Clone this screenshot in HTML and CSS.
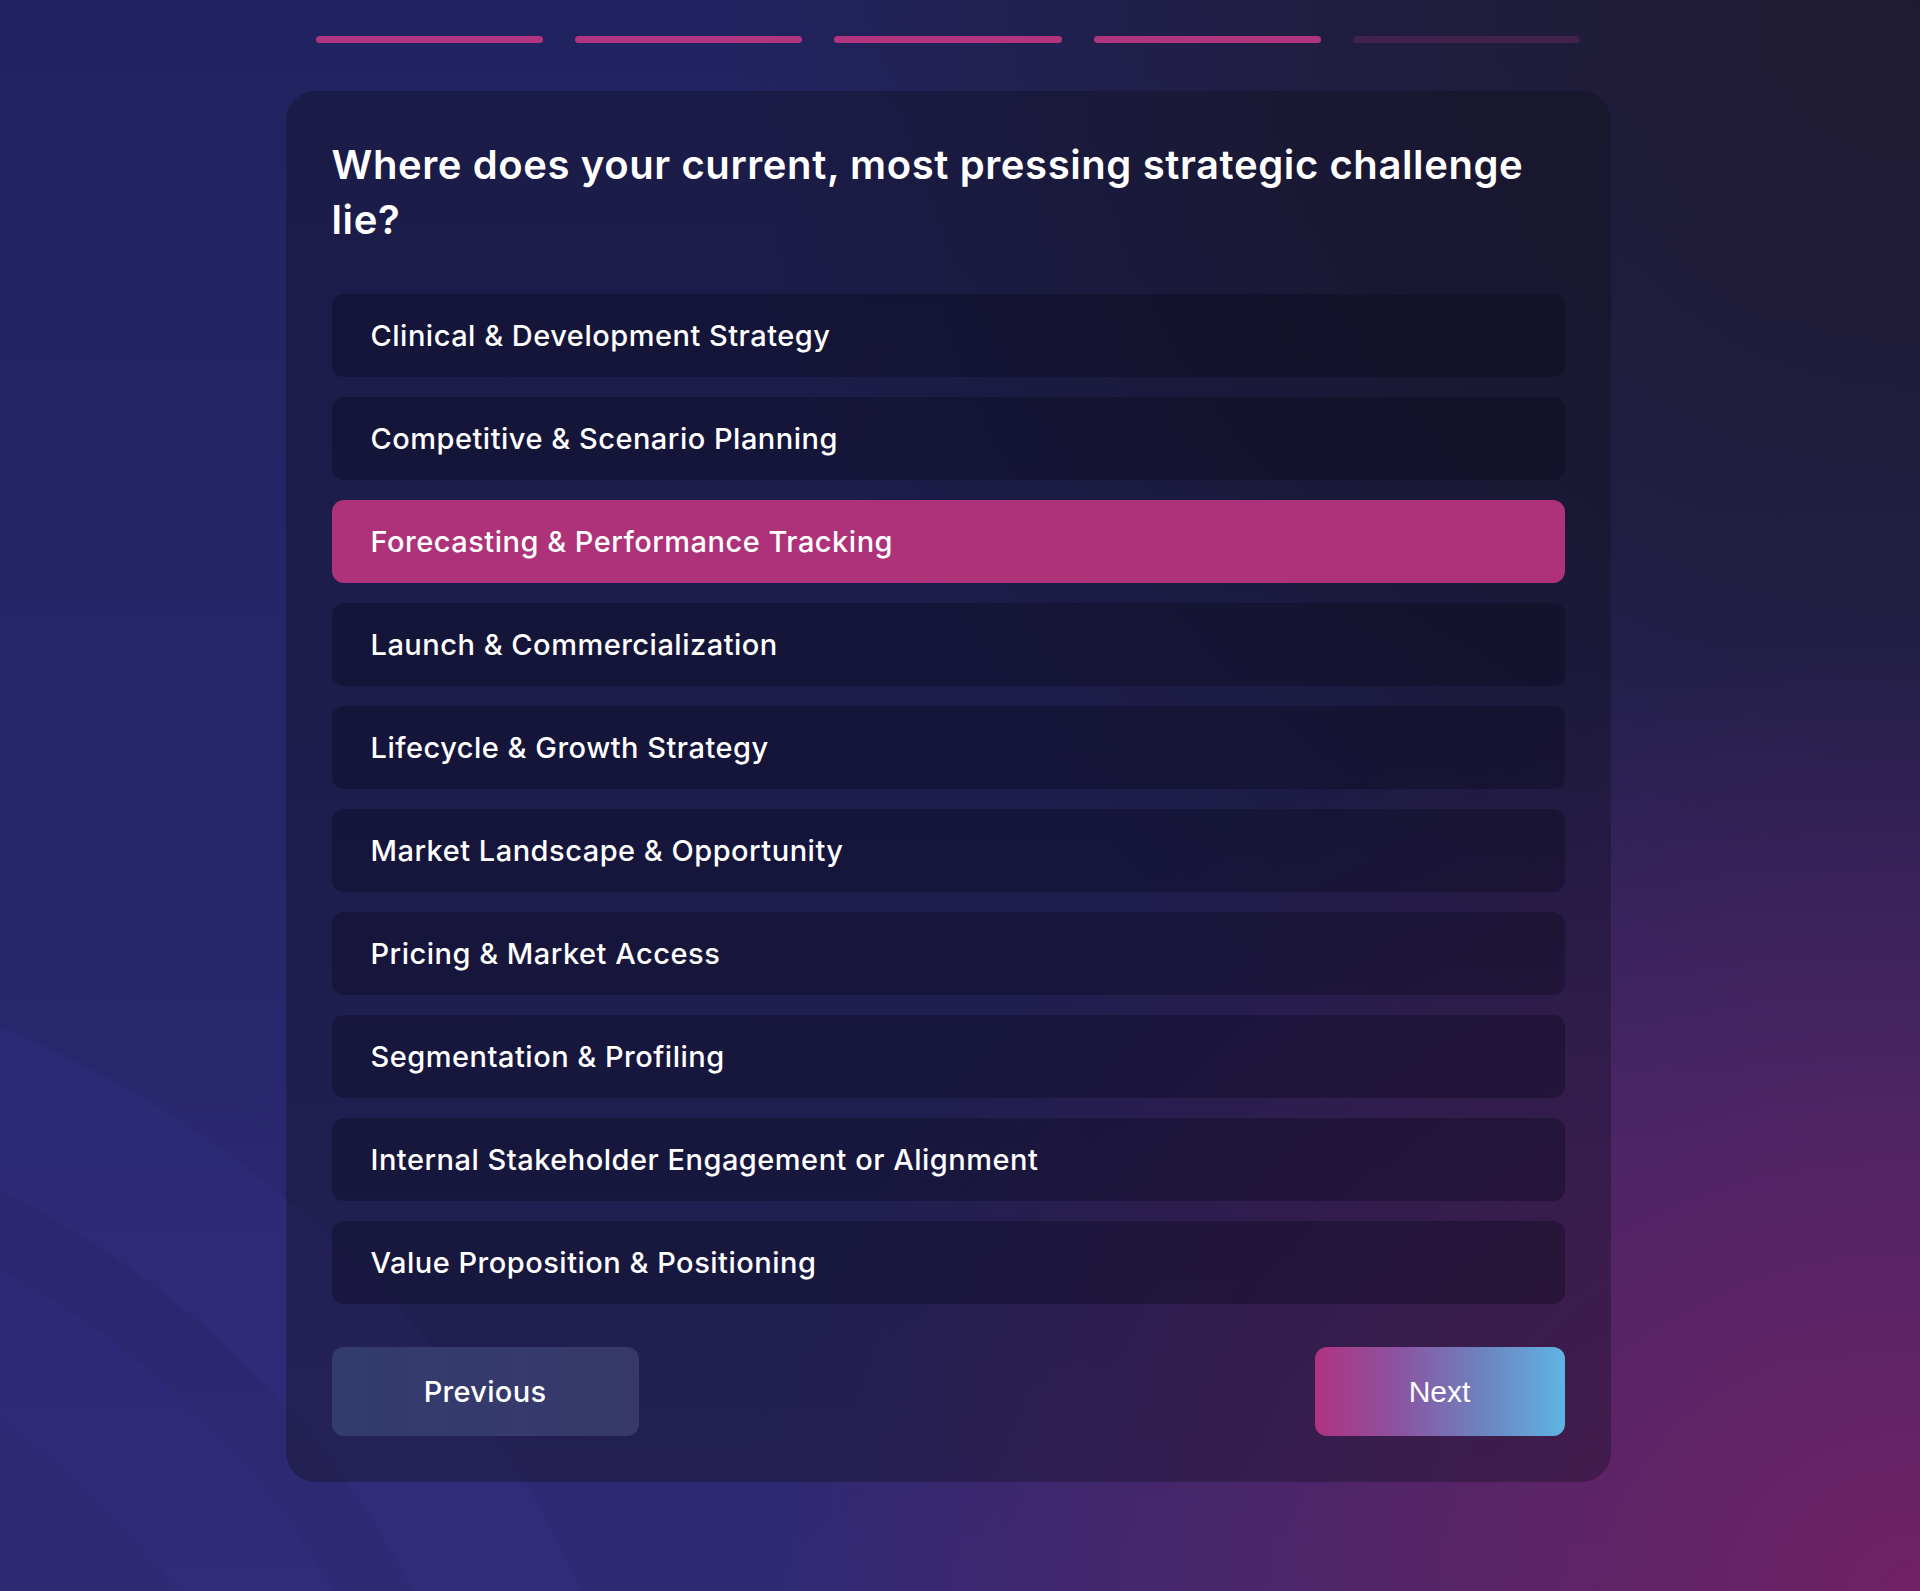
FILE: index.html
```html
<!DOCTYPE html>
<html lang="en">
<head>
    <meta charset="UTF-8">
    <meta name="viewport" content="width=device-width, initial-scale=1.0">
    <title>Strategy Quiz</title>
    <link rel="stylesheet" href="styles.css">
</head>
<body>
    <div class="bg_arcs">
        <div class="arc arc_outer"></div>
        <div class="arc arc_inner"></div>
    </div>
    <div class="page">
        <div class="progress">
            <div class="progress_bar done"></div>
            <div class="progress_bar done"></div>
            <div class="progress_bar done"></div>
            <div class="progress_bar done"></div>
            <div class="progress_bar"></div>
        </div>

        <div class="card">
            <h1 class="card_title">Where does your current, most pressing strategic challenge lie?</h1>

            <div class="options">
                <div class="option">Clinical &amp; Development Strategy</div>
                <div class="option">Competitive &amp; Scenario Planning</div>
                <div class="option selected">Forecasting &amp; Performance Tracking</div>
                <div class="option">Launch &amp; Commercialization</div>
                <div class="option">Lifecycle &amp; Growth Strategy</div>
                <div class="option">Market Landscape &amp; Opportunity</div>
                <div class="option">Pricing &amp; Market Access</div>
                <div class="option">Segmentation &amp; Profiling</div>
                <div class="option">Internal Stakeholder Engagement or Alignment</div>
                <div class="option">Value Proposition &amp; Positioning</div>
            </div>

            <div class="card_nav">
                <button class="btn_prev">Previous</button>
                <button class="btn_next">Next</button>
            </div>
        </div>
    </div>
</body>
</html>
```

FILE: styles.css
```css
body{
    margin: 0px;
    padding: 0px;
    min-height: 1591px;
    font-family: "Inter", "Noto Sans", sans-serif;
    color: white;
    background-color: #262462;
    background-image:
        radial-gradient(ellipse 60% 60% at 100% 100%, rgba(112, 34, 100, 1) 0%, rgba(104, 34, 98, 0.65) 45%, rgba(104, 34, 98, 0) 100%),
        radial-gradient(ellipse 62% 75% at 100% 0%, rgba(31, 27, 50, 1) 0%, rgba(31, 27, 50, 0.7) 50%, rgba(31, 27, 50, 0) 100%),
        linear-gradient(180deg, #212360 0%, #27266a 55%, #2f2a74 100%);
    position: relative;
    overflow: hidden;
}

/* soft curved bands in the lower left corner */
.bg_arcs{
    position: absolute;
    inset: 0;
    overflow: hidden;
    pointer-events: none;
}
.arc{
    position: absolute;
    border-radius: 50%;
    box-sizing: border-box;
}
.arc_outer{
    width: 2140px;
    height: 2140px;
    left: -1470px;
    top: 950px;
    border: 150px solid rgba(80, 70, 190, 0.10);
}
.arc_inner{
    width: 1700px;
    height: 1700px;
    left: -1250px;
    top: 1170px;
    border: 130px solid rgba(80, 70, 190, 0.08);
}

.page{
    position: relative;
    display: flex;
    flex-direction: column;
    align-items: center;
    padding-right: 24px;
}

.progress{
    display: flex;
    gap: 32px;
    width: 1264px;
    margin-top: 36px;
}
.progress_bar{
    flex: 1;
    height: 7px;
    border-radius: 4px;
    background-color: rgba(176, 53, 126, 0.22);
}
.progress_bar.done{
    background-color: #b0357e;
}

.card{
    box-sizing: border-box;
    width: 1325px;
    margin-top: 48px;
    padding: 46px;
    border-radius: 30px;
    background-color: rgba(15, 15, 25, 0.35);
}
.card_title{
    margin: 0px;
    font-size: 40px;
    line-height: 55px;
    font-weight: 600;
    letter-spacing: 0.6px;
}

.options{
    display: flex;
    flex-direction: column;
    gap: 20px;
    margin-top: 47px;
}
.option{
    height: 83px;
    display: flex;
    align-items: center;
    padding-left: 39px;
    border-radius: 12px;
    background-color: rgba(10, 10, 25, 0.35);
    font-size: 29px;
    font-weight: 500;
    letter-spacing: 0.5px;
    cursor: pointer;
}
.option.selected{
    background-color: #ad327a;
}

.card_nav{
    display: flex;
    justify-content: space-between;
    margin-top: 43px;
}
.btn_prev,
.btn_next{
    height: 89px;
    border: none;
    border-radius: 12px;
    color: white;
    cursor: pointer;
}
.btn_prev{
    width: 307px;
    background: linear-gradient(90deg, #323c6e, #38386a);
    font-family: "Inter", "Noto Sans", sans-serif;
    font-size: 29px;
    font-weight: 500;
    letter-spacing: 0.3px;
}
.btn_next{
    width: 250px;
    background: linear-gradient(90deg, #b0337f 0%, #8a55a3 35%, #6f80bd 65%, #5fb4e3 100%);
    font-family: "Liberation Sans", Arial, sans-serif;
    font-size: 30px;
}
```
